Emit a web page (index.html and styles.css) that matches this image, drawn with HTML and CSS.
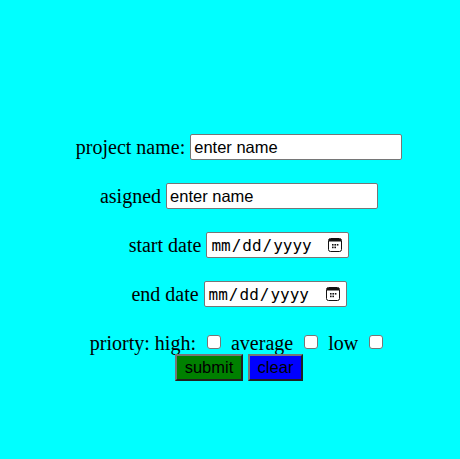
FILE: index.html
```html
<!DOCTYPE html>
<html>
<head>
<meta charset="utf-8">
<link rel="stylesheet" href="styles.css">
</head>
<body>
<form class="form">
  <div class="row">project name: <input class="text" type="text" value="enter name"></div>
  <div class="row">asigned <input class="text" type="text" value="enter name"></div>
  <div class="row">start date <span class="datewrap"><input class="date" type="date"><svg class="cal" width="14" height="15" viewBox="0 0 14 15"><rect x="0.5" y="0.5" width="13" height="13" rx="2" fill="none" stroke="#111" stroke-width="1"/><rect x="1" y="1" width="12" height="2.5" fill="#111"/><rect x="4" y="6" width="1.6" height="1.6" fill="#111"/><rect x="6.4" y="6" width="1.6" height="1.6" fill="#111"/><rect x="8.8" y="6" width="1.6" height="1.6" fill="#111"/><rect x="4" y="8.6" width="1.6" height="1.6" fill="#111"/><rect x="6.4" y="8.6" width="1.6" height="1.6" fill="#111"/></svg></span></div>
  <div class="row gapafter">end date <span class="datewrap"><input class="date" type="date"><svg class="cal" width="14" height="15" viewBox="0 0 14 15"><rect x="0.5" y="0.5" width="13" height="13" rx="2" fill="none" stroke="#111" stroke-width="1"/><rect x="1" y="1" width="12" height="2.5" fill="#111"/><rect x="4" y="6" width="1.6" height="1.6" fill="#111"/><rect x="6.4" y="6" width="1.6" height="1.6" fill="#111"/><rect x="8.8" y="6" width="1.6" height="1.6" fill="#111"/><rect x="4" y="8.6" width="1.6" height="1.6" fill="#111"/><rect x="6.4" y="8.6" width="1.6" height="1.6" fill="#111"/></svg></span></div>
  <div class="row prio">priorty: high: <input class="chk" type="checkbox"> average <input class="chk" type="checkbox"> low <input class="chk" type="checkbox"></div>
  <div class="row btns"><button type="button" class="btn submit">submit</button><button type="button" class="btn clear">clear</button></div>
</form>
</body>
</html>
```

FILE: styles.css
```css
html, body {
  margin: 0;
  padding: 0;
}
body {
  background: #00ffff;
  font-family: "Liberation Serif", "Times New Roman", serif;
  font-size: 20px;
  color: #000;
}
.form {
  display: flex;
  flex-direction: column;
  align-items: center;
  padding-top: 133px;
  padding-left: 18px;
  text-align: center;
}
.row {
  height: 28px;
  margin-bottom: 21px;
  display: flex;
  align-items: center;
  white-space: pre;
}
.row.gapafter {
  margin-bottom: 24px;
}
.text {
  box-sizing: border-box;
  width: 212px;
  height: 26px;
  font-family: "Liberation Sans", Arial, sans-serif;
  font-size: 16.5px;
  margin: 0;
  padding: 1px 3px;
  border: 1px solid #767676;
  border-radius: 2px;
}
.datewrap {
  position: relative;
  display: inline-flex;
}
.date {
  box-sizing: border-box;
  width: 143px;
  height: 26px;
  font-family: "DejaVu Sans Mono", monospace;
  font-size: 16px;
  margin: 0;
  padding: 1px 3px;
  border: 1px solid #767676;
  border-radius: 2px;
  background: #fff;
}
.date::-webkit-calendar-picker-indicator {
  opacity: 0;
}
.cal {
  position: absolute;
  right: 7px;
  top: 6px;
  pointer-events: none;
}
.prio {
  height: 22px;
  margin-bottom: 0;
}
.chk {
  -webkit-appearance: none;
  appearance: none;
  box-sizing: border-box;
  width: 14px;
  height: 14px;
  margin: 3px 5px 3px 6px;
  background: #fff;
  border: 1px solid #767676;
  border-radius: 3px;
  position: relative;
  top: -1px;
}
.btns {
  height: 27px;
  gap: 5px;
}
.btn {
  box-sizing: border-box;
  height: 27px;
  font-family: "Liberation Sans", Arial, sans-serif;
  font-size: 16.5px;
  color: #000;
  padding: 1px 4px;
  border: 2px outset #767676;
  border-radius: 0;
  margin: 0;
}
.submit {
  background: #008000;
  width: 68px;
}
.clear {
  background: #0000ff;
  width: 55px;
}
```
